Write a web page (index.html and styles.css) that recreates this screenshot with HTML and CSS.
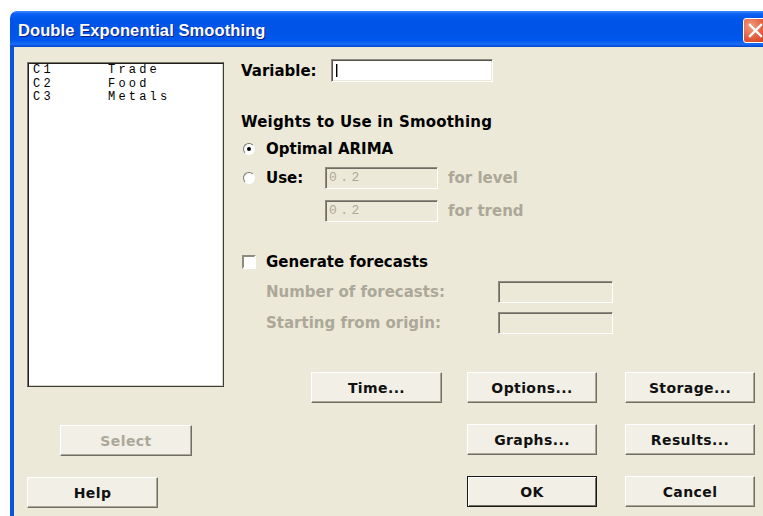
FILE: index.html
```html
<!DOCTYPE html>
<html lang="en">
<head>
<meta charset="utf-8">
<title>Double Exponential Smoothing</title>
<link rel="stylesheet" href="styles.css">
</head>
<body>
<div class="window">
  <div class="titlebar">
    <span class="title">Double Exponential Smoothing</span>
    <span class="close-btn">
      <svg width="25" height="25" viewBox="0 0 25 25">
        <path d="M7 7 L18 18 M18 7 L7 18" stroke="#fff" stroke-width="2.4" stroke-linecap="square"/>
      </svg>
    </span>
  </div>
  <div class="dialog">
    <div class="left-col">
      <div class="listbox">
        <div class="list-item"><span class="col-id">C1</span><span>Trade</span></div>
        <div class="list-item"><span class="col-id">C2</span><span>Food</span></div>
        <div class="list-item"><span class="col-id">C3</span><span>Metals</span></div>
      </div>
      <button class="btn btn-select" disabled>Select</button>
      <button class="btn btn-help">Help</button>
    </div>
    <div class="right-col">
      <div class="row var-row">
        <span class="label">Variable:</span>
        <span class="field field-var"><span class="caret"></span></span>
      </div>
      <div class="heading">Weights to Use in Smoothing</div>
      <div class="row opt-row">
        <span class="radio checked"><span class="dot"></span></span>
        <span class="label">Optimal ARIMA</span>
      </div>
      <div class="row use-row">
        <span class="radio"></span>
        <span class="label use-label">Use:</span>
        <span class="field field-weight disabled">0.2</span>
        <span class="label muted">for level</span>
      </div>
      <div class="row trend-row">
        <span class="field field-weight disabled">0.2</span>
        <span class="label muted">for trend</span>
      </div>
      <div class="row check-row">
        <span class="checkbox"></span>
        <span class="label">Generate forecasts</span>
      </div>
      <div class="row fc-row fc-first">
        <span class="label muted fc-label">Number of forecasts:</span>
        <span class="field field-fc disabled"></span>
      </div>
      <div class="row fc-row">
        <span class="label muted fc-label">Starting from origin:</span>
        <span class="field field-fc disabled"></span>
      </div>
      <div class="button-grid">
        <button class="btn">Time...</button>
        <button class="btn">Options...</button>
        <button class="btn">Storage...</button>
        <button class="btn c2">Graphs...</button>
        <button class="btn">Results...</button>
        <button class="btn btn-default c2">OK</button>
        <button class="btn">Cancel</button>
      </div>
    </div>
  </div>
</div>
</body>
</html>
```

FILE: styles.css
```css
html, body {
  margin: 0;
  padding: 0;
  background: #fff;
  overflow: hidden;
  width: 763px;
  height: 516px;
}

.window {
  margin: 11px 0 0 10px;
  width: 770px;
  height: 520px;
  display: flex;
  flex-direction: column;
}

.titlebar {
  height: 36px;
  flex: none;
  border-top-left-radius: 7px;
  background: linear-gradient(#3b8cff 0, #0a5ff4 3px, #0055ea 8px, #0054e6 60%, #0058ee 82%, #1b6cf6 92%, #0044cc 100%);
  display: flex;
  align-items: center;
  position: relative;
}

.title {
  margin-left: 8px;
  margin-top: 2px;
  color: #fff;
  font-family: "Liberation Sans", Arial, sans-serif;
  font-weight: bold;
  font-size: 16.5px;
  letter-spacing: 0.1px;
  text-shadow: 1px 1px 0 #0a1e8a;
}

.close-btn {
  position: absolute;
  left: 733px;
  top: 7px;
  width: 25px;
  height: 25px;
  box-sizing: border-box;
  border: 1px solid #fff;
  border-radius: 3px;
  background: radial-gradient(circle at 30% 30%, #f29a7c, #e0583a 60%, #c8401f);
  display: flex;
  align-items: center;
  justify-content: center;
}

.close-btn svg {
  display: block;
  margin: -1px;
}

.dialog {
  flex: 1;
  background: #ece9d8;
  border-left: 4px solid #0855dd;
  display: grid;
  grid-template-columns: 197px 1fr;
  column-gap: 17px;
  padding-left: 13px;
  font-family: "DejaVu Sans", Verdana, sans-serif;
  font-weight: bold;
  font-size: 15px;
  color: #000;
}

/* left column: variable list and its buttons */
.left-col {
  display: flex;
  flex-direction: column;
  align-items: flex-start;
}

.listbox {
  margin-top: 15px;
  width: 197px;
  height: 325px;
  box-sizing: border-box;
  background: #fff;
  border: 1px solid #3c3c3c;
  border-top-color: #7a786c;
  border-left-color: #7a786c;
  box-shadow: inset 1px 1px 0 #1e1e1e, inset -1px -1px 0 #d8d4c4;
  padding: 1px 0 0 5px;
  font-family: "Liberation Mono", "Courier New", monospace;
  font-weight: normal;
  font-size: 12px;
  letter-spacing: 3.2px;
  line-height: 13.6px;
  color: #000;
}

.list-item {
  display: flex;
}

.col-id {
  width: 75px;
}

.btn {
  box-sizing: border-box;
  width: 130px;
  height: 31px;
  padding: 0;
  margin: 0;
  background: #f1efe6;
  border: 1px solid #fff;
  border-right-color: #716f64;
  border-bottom-color: #716f64;
  box-shadow: inset -1px -1px 0 #aca899;
  font-family: "DejaVu Sans", Verdana, sans-serif;
  font-weight: bold;
  font-size: 14px;
  color: #111;
  letter-spacing: 0.4px;
}

.btn:disabled {
  color: #aca899;
}

.btn-select {
  margin-top: 38px;
  margin-left: 33px;
  width: 132px;
}

.btn-help {
  margin-top: 21px;
  width: 131px;
}

.btn-default {
  border: 1px solid #1a1a1a;
  box-shadow: inset 1px 1px 0 #fff, inset -1px -1px 0 #716f64;
}

/* right column: options */
.right-col {
  display: flex;
  flex-direction: column;
}

.row {
  display: flex;
  align-items: center;
}

.label {
  white-space: nowrap;
}

.muted {
  color: #aca899;
}

.var-row {
  margin-top: 12px;
  height: 23px;
}

.field {
  box-sizing: border-box;
  display: block;
  background: #fff;
  border: 1px solid #fff;
  border-top-color: #8e8c80;
  border-left-color: #8e8c80;
  box-shadow: inset 1px 1px 0 #545248, inset -1px -1px 0 #ece9d8;
  position: relative;
}

.field.disabled {
  background: #ece9d8;
  border-color: #8e8c80 #fff #fff #8e8c80;
  box-shadow: inset 1px 1px 0 #6e6c62;
}

.field-var {
  margin-left: 14px;
  width: 162px;
  height: 23px;
}

.caret {
  position: absolute;
  left: 4px;
  top: 4px;
  width: 1px;
  height: 13px;
  background: #000;
  box-shadow: 1px 0 0 #999;
}

.heading {
  margin-top: 32px;
  height: 17px;
  line-height: 17px;
  white-space: nowrap;
  letter-spacing: 0.2px;
}

.opt-row {
  margin-top: 9px;
  height: 18px;
}

.radio {
  flex: none;
  width: 12px;
  height: 12px;
  margin-left: 2px;
  margin-right: 11px;
  box-sizing: border-box;
  border-radius: 50%;
  background: #fff;
  border: 1px solid #fff;
  border-top-color: #7a786c;
  border-left-color: #7a786c;
  position: relative;
}

.radio .dot {
  position: absolute;
  left: 3px;
  top: 3px;
  width: 4px;
  height: 4px;
  border-radius: 50%;
  background: #000;
}

.use-row {
  margin-top: 9px;
  height: 22px;
}

.use-label {
  width: 59px;
}

.field-weight {
  width: 113px;
  height: 22px;
  margin-right: 10px;
  padding: 2px 0 0 3px;
  font-family: "Liberation Mono", "Courier New", monospace;
  font-weight: normal;
  font-size: 13px;
  letter-spacing: 3.4px;
  line-height: 16px;
  color: #aca899;
}

.trend-row {
  margin-top: 11px;
  height: 22px;
  padding-left: 84px;
}

.check-row {
  margin-top: 31px;
  height: 18px;
}

.checkbox {
  flex: none;
  width: 14px;
  height: 14px;
  margin-left: 1px;
  margin-right: 10px;
  box-sizing: border-box;
  background: #fff;
  border: 2px solid #fff;
  border-top-color: #8e8c80;
  border-left-color: #8e8c80;
}

.fc-row {
  margin-top: 9px;
  height: 22px;
  padding-left: 25px;
}

.fc-first {
  margin-top: 9px;
  height: 23px;
}

.fc-label {
  width: 232px;
}

.field-fc {
  width: 115px;
  height: 22px;
}

.button-grid {
  margin-top: 38px;
  margin-left: 70px;
  display: grid;
  grid-template-columns: 156px 158px 130px;
  grid-template-rows: 31px 31px 31px;
  row-gap: 21px;
}

.button-grid .btn:first-child {
  width: 131px;
}

.c2 {
  grid-column: 2;
}
```
